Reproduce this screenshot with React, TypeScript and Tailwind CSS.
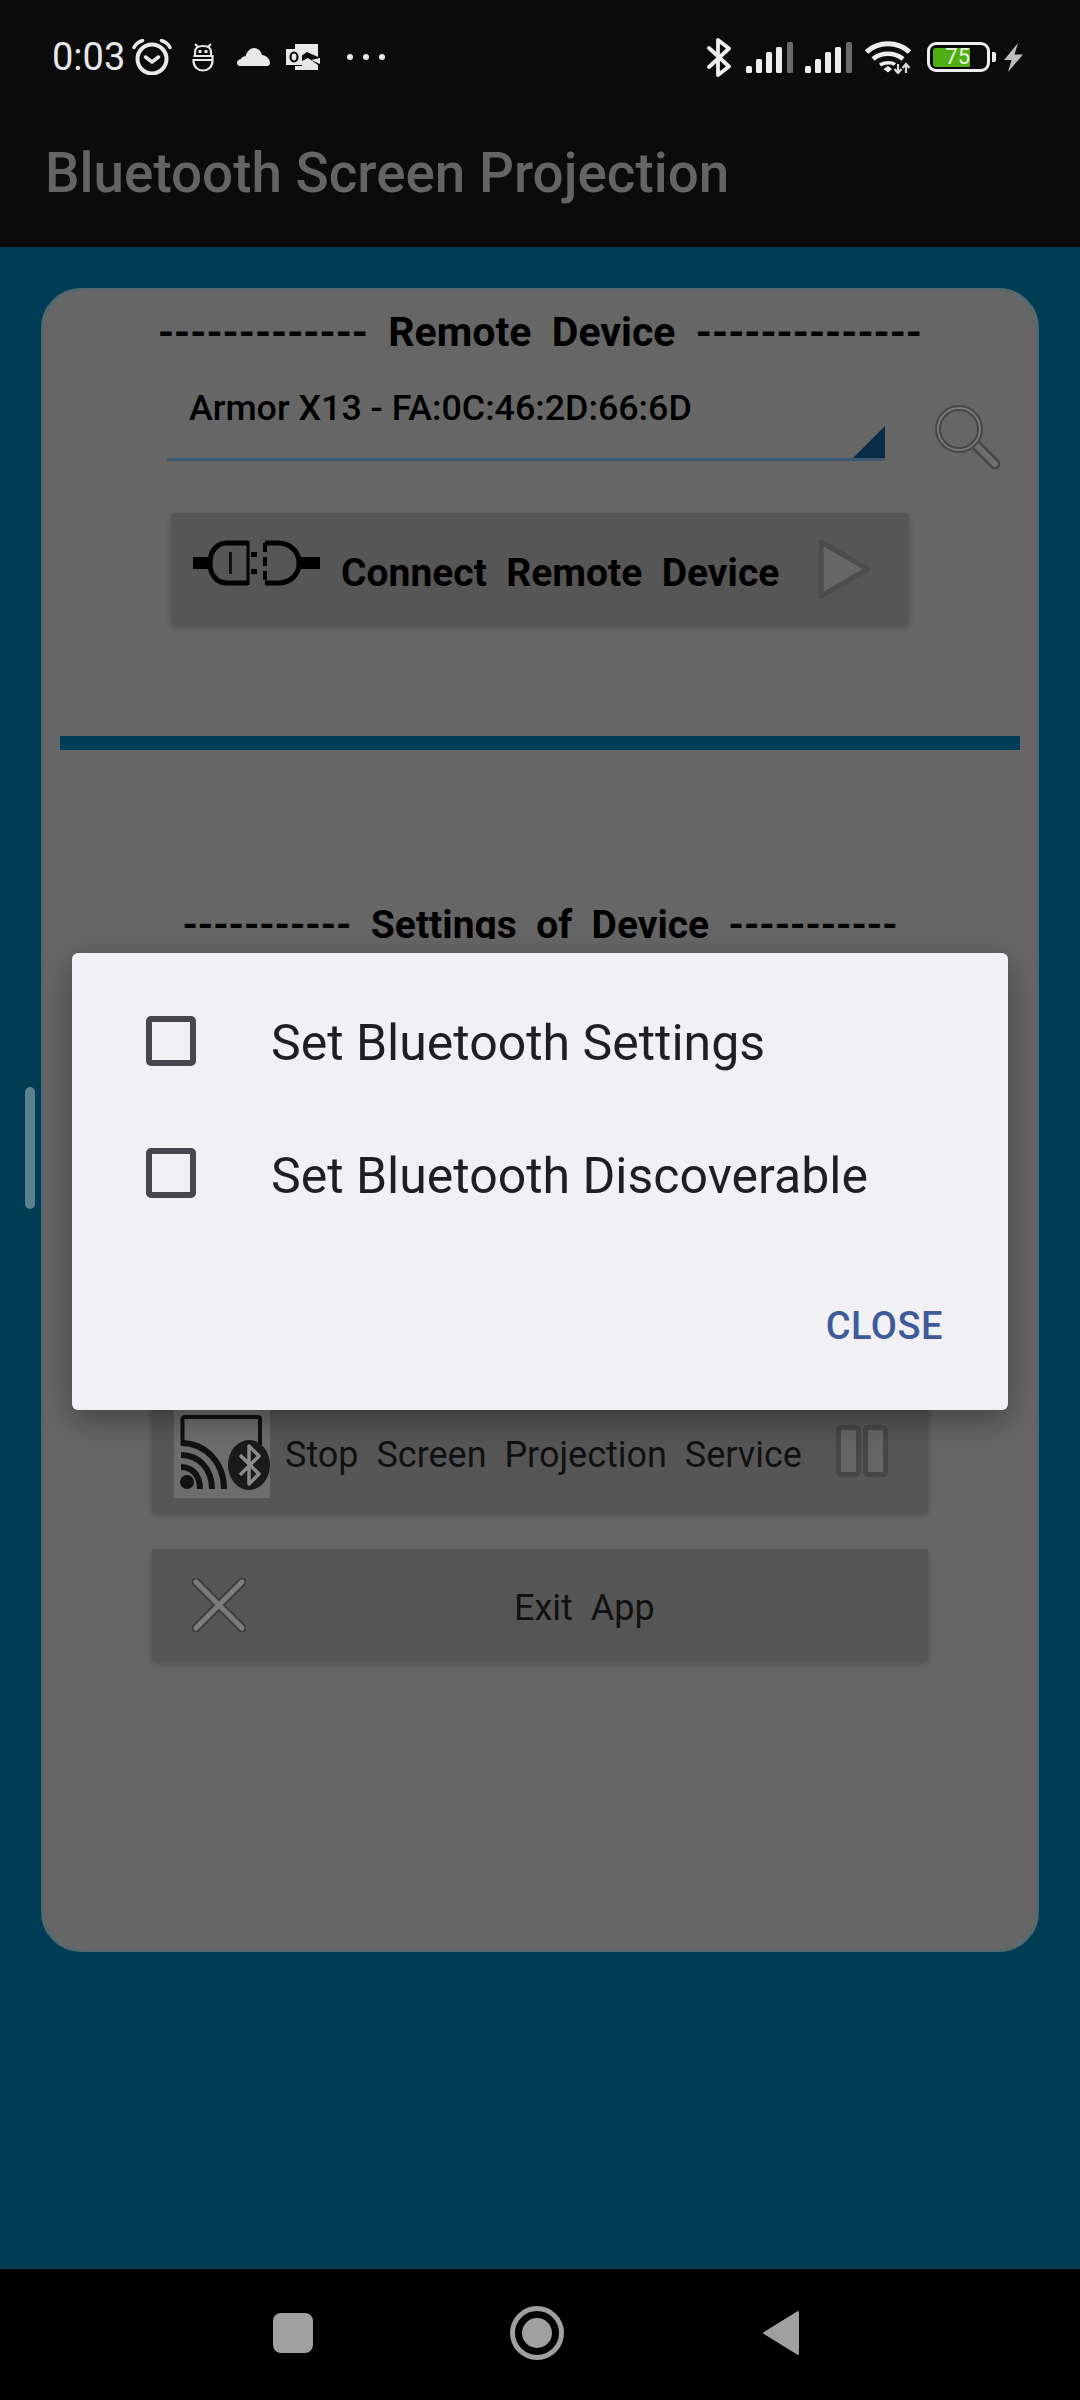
const roboto = "font-['Roboto',sans-serif]";

function Alarm() {
  return (
    <svg width="40" height="36" viewBox="0 0 40 36" className="shrink-0">
      <circle cx="20" cy="20" r="14.5" fill="none" stroke="#e8e8e8" strokeWidth="4" />
      <path d="M13.5 18l6.5 5 6.500-5" fill="none" stroke="#e8e8e8" strokeWidth="3.5" strokeLinecap="round" strokeLinejoin="round" />
      <path d="M2 8.500C4 4.500 7 2.500 10.500 1.500" fill="none" stroke="#e8e8e8" strokeWidth="3.500" strokeLinecap="round" />
      <path d="M38 8.500C36 4.500 33 2.500 29.500 1.500" fill="none" stroke="#e8e8e8" strokeWidth="3.500" strokeLinecap="round" />
    </svg>
  );
}

function RobotHead() {
  return (
    <svg width="22" height="29" viewBox="0 0 22 29" className="shrink-0">
      <path d="M3 13V9C3 5 6 3 11 3s8 2 8 6v4z" fill="none" stroke="#e8e8e8" strokeWidth="2.200" />
      <path d="M1.500 13H20.500V18C20.500 24 16 27.500 11 27.500S1.500 24 1.500 18V17H20" fill="none" stroke="#e8e8e8" strokeWidth="2.200" />
      <rect x="6.500" y="7" width="3" height="3" fill="#e8e8e8" />
      <rect x="12.500" y="7" width="3" height="3" fill="#e8e8e8" />
      <path d="M3 1l3 3M19 1l-3 3" stroke="#e8e8e8" strokeWidth="2" />
    </svg>
  );
}

function Cloud() {
  return (
    <svg width="33" height="18" viewBox="0 0 33 18" className="shrink-0">
      <path d="M3 18C1 18 0 16.500 0 15c0-2 1.500-3.500 4-4 1-2 3-3 4.500-2.500C10 3 13.500 0 17 0c4 0 7 3 8 7 4 .5 8 3.500 8 8 0 1.500-1 3-3 3z" fill="#e8e8e8" />
    </svg>
  );
}

function Outlook() {
  return (
    <svg width="34" height="26" viewBox="0 0 34 26" className="shrink-0">
      <path d="M9 0H32V13L21 8 16 11.500V5H9z" fill="#e8e8e8" />
      <path d="M34 14V20L25 16z" fill="#e8e8e8" />
      <path d="M9 22H16V17L22 14 32 21V26H9z" fill="#e8e8e8" />
      <rect x="0" y="5" width="16" height="16" fill="#e8e8e8" />
      <ellipse cx="8" cy="13" rx="3.500" ry="4.500" fill="none" stroke="#0b0b0b" strokeWidth="2.200" />
    </svg>
  );
}

function Bluetooth() {
  return (
    <svg width="24" height="39" viewBox="0 0 24 39" className="shrink-0">
      <path d="M2 10l20 18.500L11 37V2l11 8.500L2 29" fill="none" stroke="#eeeeee" strokeWidth="3.800" strokeLinejoin="round" strokeLinecap="round" />
    </svg>
  );
}

function Signal() {
  const bars = [
    { x: 0, h: 7, c: "#eeeeee" },
    { x: 10, h: 14, c: "#eeeeee" },
    { x: 20, h: 21, c: "#eeeeee" },
    { x: 30, h: 26, c: "#eeeeee" },
    { x: 41, h: 31, c: "#6a6a6a" },
  ];
  return (
    <svg width="47" height="31" viewBox="0 0 47 31" className="shrink-0">
      {bars.map((b) => (
        <rect key={b.x} x={b.x} y={31 - b.h} width="6" height={b.h} rx="1.500" fill={b.c} />
      ))}
    </svg>
  );
}

function Wifi() {
  return (
    <svg width="46" height="34" viewBox="0 0 46 34" className="shrink-0">
      <path d="M1.500 12C13 1 33 1 44.500 12" fill="none" stroke="#eeeeee" strokeWidth="5" />
      <path d="M8 19C16 12 30 12 38 19" fill="none" stroke="#eeeeee" strokeWidth="4.500" />
      <path d="M15 25C19 22 27 22 30 24.500" fill="none" stroke="#eeeeee" strokeWidth="3.500" />
      <path d="M18.500 29L23 26l4 3-4 3.500z" fill="#eeeeee" />
      <path d="M33 24v9M29.500 29l3.500 4 3.500-4" fill="none" stroke="#d8d8d8" strokeWidth="2.200" />
      <path d="M41 33v-9M37.500 28l3.500-4 3.500 4" fill="none" stroke="#d8d8d8" strokeWidth="2.200" />
    </svg>
  );
}

function Bolt() {
  return (
    <svg width="19" height="29" viewBox="0 0 19 29" className="shrink-0">
      <path d="M14 0L0 17H7.500L4 29 19 11.500H10.500z" fill="#bdbdbd" />
    </svg>
  );
}

function StatusBar() {
  return (
    <div className={`flex h-[114px] items-center pl-[52px] pr-[57px] ${roboto}`}>
      <span className="text-[38px] leading-none text-[#e8e8e8]">0:03</span>
      <div className="ml-[7px]"><Alarm /></div>
      <div className="ml-[20px]"><RobotHead /></div>
      <div className="ml-[23px]"><Cloud /></div>
      <div className="ml-[16px]"><Outlook /></div>
      <div className="ml-[27px] flex gap-[10px]">
        <span className="h-[6px] w-[6px] rounded-full bg-[#e8e8e8]" />
        <span className="h-[6px] w-[6px] rounded-full bg-[#e8e8e8]" />
        <span className="h-[6px] w-[6px] rounded-full bg-[#e8e8e8]" />
      </div>
      <div className="ml-auto flex items-center">
        <Bluetooth />
        <div className="ml-[15px]"><Signal /></div>
        <div className="ml-[12px]"><Signal /></div>
        <div className="ml-[13px]"><Wifi /></div>
        <div className="ml-[16px] flex h-[30px] w-[63px] items-center rounded-[9px] border-[3px] border-[#eeeeee] pl-[3px]">
          <div className="flex h-[19px] w-[37px] items-center justify-end rounded-l-[3px] bg-[#4fae12]">
            <span className="text-[22px] leading-none text-[#e8f5e0]">75</span>
          </div>
        </div>
        <div className="ml-[2px] h-[10px] w-[4px] rounded-r-[2px] bg-[#eeeeee]" />
        <div className="ml-[8px]"><Bolt /></div>
      </div>
    </div>
  );
}

function SearchIcon() {
  return (
    <svg width="66" height="64" viewBox="0 0 66 64" className="shrink-0">
      <path d="M41 40L60 59" stroke="#474747" strokeWidth="11" strokeLinecap="round" />
      <path d="M41 40L60 59" stroke="#6f6f6f" strokeWidth="6" strokeLinecap="round" />
      <circle cx="24" cy="24" r="21" fill="none" stroke="#474747" strokeWidth="6" />
      <circle cx="24" cy="24" r="21" fill="none" stroke="#7a7a7a" strokeWidth="2" />
    </svg>
  );
}

function PlugIcon() {
  return (
    <svg width="127" height="46" viewBox="0 0 127 46" className="shrink-0">
      <rect x="0" y="17" width="18" height="12" fill="#000" />
      <path d="M55 3H34C23 3 17 12 17 23S23 43 34 43H55" fill="none" stroke="#000" strokeWidth="5" />
      <path d="M55 1V45" stroke="#000" strokeWidth="3" />
      <rect x="36" y="12" width="3" height="22" fill="#111" />
      <rect x="58" y="12" width="6" height="5" fill="#000" />
      <rect x="58" y="29" width="6" height="5" fill="#000" />
      <path d="M72 3H85C98 3 106 12 106 23S98 43 85 43H72" fill="none" stroke="#000" strokeWidth="5" />
      <path d="M72 3V43" stroke="#000" strokeWidth="4" strokeDasharray="9 5" />
      <rect x="104" y="17" width="23" height="12" fill="#000" />
    </svg>
  );
}

function PlayIcon() {
  return (
    <svg width="54" height="60" viewBox="0 0 54 60" className="shrink-0">
      <path d="M3 3L50 30 3 57z" fill="#666666" stroke="#4c4c4c" strokeWidth="5" strokeLinejoin="round" />
    </svg>
  );
}

function CastIcon() {
  return (
    <svg width="90" height="75" viewBox="0 0 90 75" className="block">
      <path d="M2.500 30V4A2 2 0 0 1 4.500 2H78A2 2 0 0 1 80 4V30" fill="none" stroke="#111" strokeWidth="4" />
      <circle cx="7" cy="67" r="7" fill="#111" />
      <path d="M1 52C12 52 20 60 20 74" fill="none" stroke="#111" strokeWidth="6" />
      <path d="M1 40C19 40 32 54 32 74" fill="none" stroke="#111" strokeWidth="6" />
      <path d="M1 28C26 28 44 48 44 74" fill="none" stroke="#111" strokeWidth="6" />
      <ellipse cx="69" cy="50" rx="21" ry="25" fill="#1a1a1a" />
      <path d="M60 40L79 59 69 69V31L79 41 60 60" fill="none" stroke="#8a8a8a" strokeWidth="3.500" strokeLinejoin="round" />
    </svg>
  );
}

function PauseIcon() {
  return (
    <svg width="52" height="52" viewBox="0 0 52 52" className="shrink-0">
      <rect x="2.500" y="2.500" width="20" height="47" rx="3" fill="#666" stroke="#474747" strokeWidth="5" />
      <rect x="29.500" y="2.500" width="20" height="47" rx="3" fill="#666" stroke="#474747" strokeWidth="5" />
    </svg>
  );
}

function ExitIcon() {
  return (
    <svg width="54" height="54" viewBox="0 0 54 54" className="shrink-0">
      <path d="M4 4L50 50M50 4L4 50" stroke="#3f3f3f" strokeWidth="9" strokeLinecap="round" />
      <path d="M4 4L50 50M50 4L4 50" stroke="#7c7c7c" strokeWidth="5" strokeLinecap="round" />
    </svg>
  );
}

function Checkbox() {
  return <div className="h-[50px] w-[50px] shrink-0 rounded-[5px] border-[6px] border-[#46464f]" />;
}

function Dialog() {
  return (
    <div className={`absolute left-[72px] top-[953px] flex h-[457px] w-[936px] flex-col rounded-[6px] bg-[#f1f0f5] shadow-[0_10px_30px_rgba(0,0,0,0.35)] ${roboto}`}>
      <div className="flex items-start pl-[74px] pt-[63px]">
        <Checkbox />
        <span className="ml-[75px] mt-[2px] text-[50px] leading-none text-[#1e1e24]">Set Bluetooth Settings</span>
      </div>
      <div className="mt-[80px] flex items-start pl-[74px]">
        <Checkbox />
        <span className="ml-[75px] mt-[3px] text-[50px] leading-none text-[#1e1e24]">Set Bluetooth Discoverable</span>
      </div>
      <div className="mt-[106px] flex justify-end pr-[65px]">
        <span className="text-[38px] font-medium leading-none tracking-[0.5px] text-[#3f5a9a]">CLOSE</span>
      </div>
    </div>
  );
}

export default function App() {
  return (
    <div className={`relative flex h-[2400px] w-[1080px] flex-col overflow-hidden bg-[#003c54] ${roboto}`}>
      <div className="h-[247px] shrink-0 bg-[#0b0b0b]">
        <StatusBar />
        <div className="pl-[45px] pt-[29px] text-[54.8px] font-medium leading-[60px] text-[#646464]">Bluetooth Screen Projection</div>
      </div>

      <div className="flex flex-1 flex-col px-[41px] pt-[41px]">
        <div className="h-[1664px] rounded-[40px] border-[3px] border-[#55676e] bg-[#666666]">
          <div className="pt-[20px] text-center text-[41px] font-bold leading-[42px] whitespace-pre text-black">
            {"-------------  Remote  Device  --------------"}
          </div>

          <div className="mt-[10px] flex items-start pl-[123px]">
            <div className="relative h-[98px] w-[718px] border-b-[3px] border-[#3a5a72]">
              <div className="pl-[22px] pt-[24px] text-[35.8px] font-medium leading-[42px] text-black">Armor X13 - FA:0C:46:2D:66:6D</div>
              <div className="absolute bottom-0 right-0 h-[32px] w-[32px] bg-[#0a2a4a] [clip-path:polygon(100%_0,100%_100%,0_100%)]" />
            </div>
            <div className="ml-[50px] mt-[42px]"><SearchIcon /></div>
          </div>

          <div className="ml-[127px] mt-[44px] flex h-[112px] w-[738px] items-center rounded-[3px] bg-[#565656] pl-[22px] shadow-[0_3px_6px_rgba(0,0,0,0.2)]">
            <div className="mb-[12px]"><PlugIcon /></div>
            <span className="ml-[21px] mt-[8px] whitespace-pre text-[39px] font-bold leading-none text-black">Connect  Remote  Device</span>
            <div className="ml-[39px]"><PlayIcon /></div>
          </div>

          <div className="mx-[16px] mt-[111px] h-[14px] bg-[#003d57]" />

          <div className="mt-[154px] h-[35px] overflow-hidden text-center text-[39px] font-bold leading-[42px] whitespace-pre text-black">
            {"-----------  Settings  of  Device  -----------"}
          </div>

          <div className="ml-[108px] mt-[461px] flex h-[112px] w-[776px] items-start rounded-[3px] bg-[#565656] shadow-[0_3px_6px_rgba(0,0,0,0.2)]">
            <div className="ml-[22px] h-[98px] w-[96px] bg-[#6d6d6d] pl-[6px] pt-[15px]">
              <CastIcon />
            </div>
            <span className="ml-[15px] mt-[34px] whitespace-pre text-[36px] leading-[42px] text-[#111111]">Stop  Screen  Projection  Service</span>
            <div className="ml-auto mr-[40px] mt-[25px]"><PauseIcon /></div>
          </div>

          <div className="ml-[108px] mt-[37px] flex h-[112px] w-[776px] items-center rounded-[3px] bg-[#565656] pl-[40px] shadow-[0_3px_6px_rgba(0,0,0,0.2)]">
            <ExitIcon />
            <span className="ml-[268px] mt-[5px] whitespace-pre text-[36px] leading-none text-[#111111]">Exit  App</span>
          </div>
        </div>
      </div>

      <div className="flex h-[131px] shrink-0 items-center bg-black pb-[4px] pl-[273px]">
        <div className="h-[40px] w-[40px] rounded-[8px] bg-[#a0a0a0]" />
        <div className="ml-[197px] flex h-[54px] w-[54px] items-center justify-center rounded-full border-[5px] border-[#a0a0a0]">
          <div className="h-[30px] w-[30px] rounded-full bg-[#a0a0a0]" />
        </div>
        <svg width="37" height="46" viewBox="0 0 37 46" className="ml-[198px]">
          <path d="M36 2v42L2 23z" fill="#a0a0a0" stroke="#a0a0a0" strokeWidth="2" strokeLinejoin="round" />
        </svg>
      </div>

      <div className="absolute left-[25px] top-[1087px] h-[122px] w-[10px] rounded-full bg-[#5a8090]" />
      <Dialog />
    </div>
  );
}
